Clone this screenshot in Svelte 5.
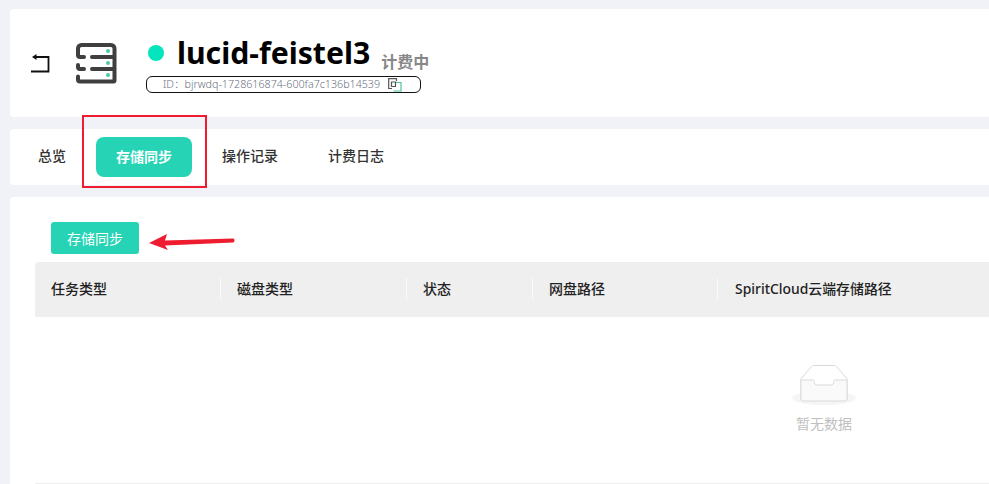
<script>
  const tabs = [
    { label: '总览', cls: 'overview' },
    { label: '存储同步', cls: 'active' },
    { label: '操作记录', cls: 'log' },
    { label: '计费日志', cls: 'bill' }
  ];
  const cols = [
    { label: '任务类型', w: 186 },
    { label: '磁盘类型', w: 186 },
    { label: '状态', w: 126 },
    { label: '网盘路径', w: 185 },
    { label: 'SpiritCloud云端存储路径', w: 271 }
  ];
</script>

<div class="page">
  <section class="card head">
    <svg class="back" width="20" height="22" viewBox="0 0 20 22" fill="none" stroke="#111" stroke-width="1.800">
      <path d="M5 6H18.500V20.500H1" />
      <path d="M6.500 3V9L2 6Z" fill="#111" stroke="none" />
    </svg>
    <svg class="server" width="41" height="41" viewBox="0 0 41 41" fill="none" stroke="#3f3f3f" stroke-width="4" stroke-linecap="round">
      <path d="M8 14H4A2 2 0 0 1 2 12V5.500A3.500 3.500 0 0 1 5.500 2H35A3.500 3.500 0 0 1 38.500 5.500V37.500A1 1 0 0 1 37.500 38.500H4A2 2 0 0 1 2 36.500V33.500"/>
      <path d="M16 14H38M16 26H38"/>
      <path d="M2 22V24A2 2 0 0 0 4 26H8"/>
      <circle cx="32" cy="8" r="2" fill="#4fc8ac" stroke="none"/>
      <circle cx="32" cy="20" r="2" fill="#4fc8ac" stroke="none"/>
      <circle cx="32" cy="32" r="2" fill="#4fc8ac" stroke="none"/>
    </svg>
    <div class="info">
      <div class="title-row">
        <i class="dot"></i>
        <h1>lucid-feistel3</h1>
        <span class="state">计费中</span>
      </div>
      <div class="id-box">
        <span>ID：bjrwdq-1728616874-600fa7c136b14539</span>
        <svg width="14" height="14" viewBox="0 0 14 14" fill="none">
          <path d="M4 10.500H.7V.7H8.500V3" stroke="#555" stroke-width="1.200"/>
          <path d="M8 4.500H13V13H5.500" stroke="#52c0a8" stroke-width="1.200"/>
          <path d="M3.500 4H7.500V8.500H3.500Z" stroke="#555" stroke-width="1.200"/>
        </svg>
      </div>
    </div>
  </section>

  <nav class="card tabs">
    {#each tabs as t}
      <span class={'tab ' + t.cls}>{t.label}</span>
    {/each}
  </nav>

  <section class="card body">
    <button class="sync">存储同步</button>
    <div class="table">
      <div class="thead">
        {#each cols as c, i}
          <div class="th" class:first={i === 0} class:last={i === cols.length - 1} style={`width:${c.w}px`}>{c.label}</div>
        {/each}
      </div>
      <div class="empty">
        <svg width="64" height="41" viewBox="0 0 64 41" fill="none">
          <ellipse cx="32" cy="33" rx="32" ry="7" fill="#f5f5f5"/>
          <path d="M55 13.800 44.500 1.500C44 .9 43.200.5 42.400.5H21.600C20.800.5 20 .9 19.500 1.500L9 13.800V35H55Z" stroke="#d9d9d9" fill="#fff"/>
          <path d="M9 15H20.500C22 15 22.500 16 22.500 17.500S23.500 20 25 20H39C40.500 20 41.500 19 41.500 17.500S42 15 43.500 15H55V33.500C55 35 54 36 52.500 36H11.500C10 36 9 35 9 33.500Z" fill="#fafafa" stroke="#d9d9d9"/>
        </svg>
        <p>暂无数据</p>
      </div>
    </div>
  </section>

  <div class="redbox"></div>
  <svg class="arrow" width="90" height="20" viewBox="0 0 90 20">
    <path d="M0 11 18 2 16 8.500 84 6.500C86 6.500 86 10 84 10.500L16 13.500 19 18Z" fill="#ee1c2e"/>
  </svg>
</div>

<style>
  :global(body) {
    margin: 0;
    background: #f0f2f8;
    overflow: hidden;
  }
  .page {
    position: relative;
    width: 989px;
    height: 484px;
    padding: 9px 0 0 10px;
    box-sizing: border-box;
    overflow: hidden;
    font-family: "Noto Sans", "Noto Sans CJK SC", sans-serif;
    color: #222;
  }
  .card {
    background: #fff;
    border-radius: 4px 0 0 4px;
    margin-bottom: 12px;
  }
  .head {
    height: 108px;
    display: flex;
    align-items: flex-start;
  }
  .back {
    margin: 42px 0 0 20px;
  }
  .server {
    margin: 34px 0 0 26px;
    flex: none;
  }
  .info {
    margin: 26px 0 0 29px;
  }
  .title-row {
    display: flex;
    align-items: flex-end;
    height: 36px;
    margin-left: 2px;
  }
  .dot {
    width: 16px;
    height: 16px;
    border-radius: 50%;
    background: #05e5bd;
    margin-bottom: 10px;
  }
  h1 {
    margin: 0 0 0 13px;
    font-size: 30.200px;
    line-height: 36px;
    font-weight: 700;
    color: #000;
  }
  .state {
    margin: 0 0 -3px 11px;
    font-size: 16px;
    line-height: 24px;
    font-weight: 700;
    color: #888;
  }
  .id-box {
    height: 15px;
    width: 257px;
    margin-top: 5px;
    border: 1px solid #111;
    border-radius: 6px;
    display: flex;
    align-items: center;
    padding-left: 16px;
    gap: 8px;
    font-size: 10.700px;
    line-height: 15px;
    color: #6a7280;
    font-weight: 300;
    white-space: nowrap;
  }
  .tabs {
    height: 56px;
    display: flex;
    align-items: center;
    position: relative;
  }
  .tab {
    font-size: 14px;
    line-height: 18px;
    padding-bottom: 2px;
    font-weight: 500;
    color: #333;
    white-space: nowrap;
  }
  .overview { margin-left: 28px; }
  .active {
    margin-left: 30px;
    width: 96px;
    height: 40px;
    padding: 0;
    line-height: 39px;
    text-align: center;
    background: #26d4b5;
    color: #fff;
    border-radius: 8px;
    font-weight: 700;
  }
  .log { margin-left: 30px; }
  .bill { margin-left: 50px; }
  .body {
    height: 300px;
    padding: 25px 0 0 25px;
  }
  .sync {
    display: block;
    margin: 0 0 8px 16px;
    width: 88px;
    height: 32px;
    border: 0;
    border-radius: 3px;
    background: #26d4b5;
    color: #fff;
    font: 400 14px "Noto Sans CJK SC", sans-serif;
    padding: 0;
  }
  .thead {
    display: flex;
    height: 55px;
    background: #efefef;
    border-radius: 4px 0 0 0;
    width: 954px;
  }
  .th {
    flex: none;
    box-sizing: border-box;
    padding-left: 16px;
    line-height: 53px;
    font-size: 14px;
    font-weight: 500;
    color: #222;
    position: relative;
    white-space: nowrap;
  }
  .th.last {
    padding-left: 17px;
    font-size: 13.900px;
  }
  .th:not(.first)::before {
    content: "";
    position: absolute;
    left: -1px;
    top: 16px;
    width: 1px;
    height: 22px;
    background: #fafafa;
  }
  .table {
    width: 954px;
    height: 221px;
    border-bottom: 1px solid #eee;
  }
  .empty {
    display: flex;
    flex-direction: column;
    align-items: center;
    margin-left: 757px;
    width: 64px;
    padding-top: 48px;
  }
  .empty p {
    margin: 7px 0 0;
    font-size: 14px;
    line-height: 22px;
    color: #bfbfbf;
    white-space: nowrap;
  }
  .redbox {
    position: absolute;
    left: 82px;
    top: 115px;
    width: 125px;
    height: 73px;
    box-sizing: border-box;
    border: 2px solid #ee1c2e;
  }
  .arrow {
    position: absolute;
    left: 149px;
    top: 232px;
  }
</style>
